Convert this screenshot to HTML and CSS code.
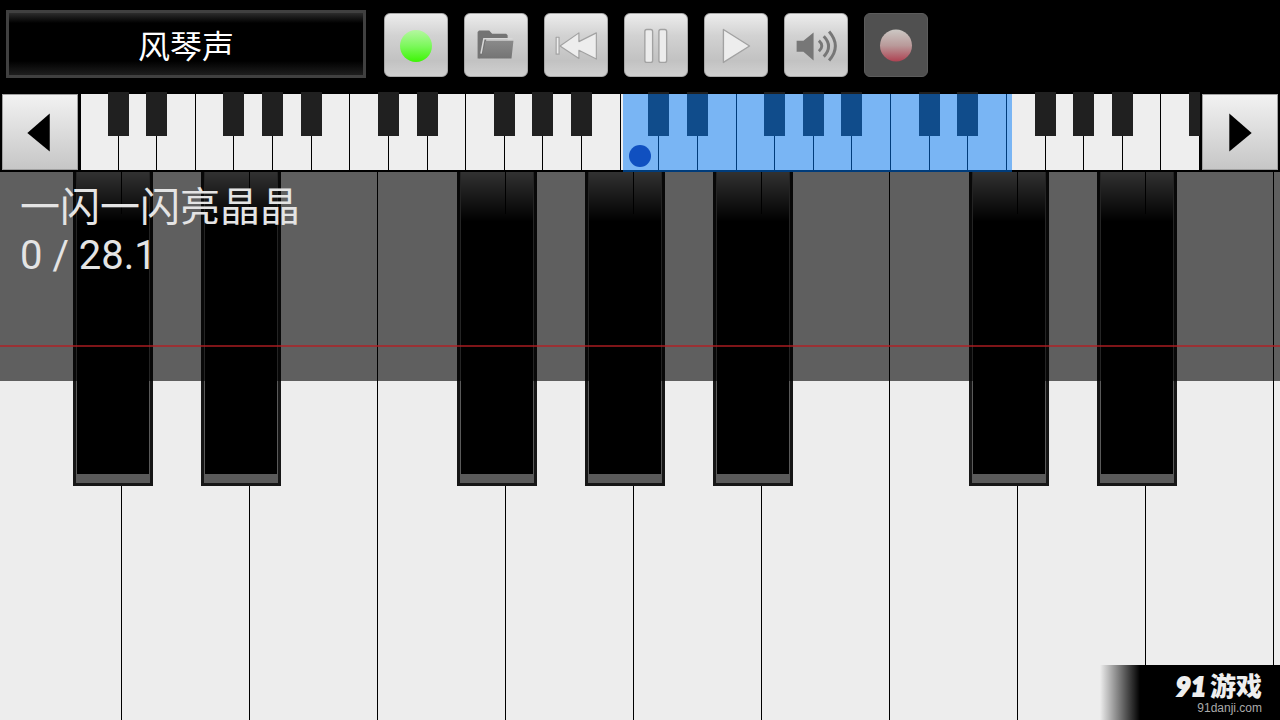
FILE: index.html
```html
<!DOCTYPE html>
<html lang="zh-CN">
<head>
    <meta charset="UTF-8">
    <meta name="viewport" content="width=device-width, initial-scale=1.0">
    <title>风琴声</title>
    <link rel="stylesheet" href="styles.css">
</head>
<body>
    <header class="toolbar">
        <button class="instrument">风琴声</button>
        <div class="controls">
            <button class="control" aria-label="Status">
                <svg viewBox="0 0 64 64">
                    <defs>
                        <linearGradient id="green" x1="0" y1="0" x2="0" y2="1">
                            <stop offset="0" stop-color="#b4f7a0"/>
                            <stop offset="0.5" stop-color="#7cf85c"/>
                            <stop offset="1" stop-color="#3df505"/>
                        </linearGradient>
                    </defs>
                    <circle cx="32" cy="33" r="16.500" fill="url(#green)"/>
                </svg>
            </button>
            <button class="control" aria-label="Open">
                <svg viewBox="0 0 64 64">
                    <defs>
                        <linearGradient id="folder" x1="0" y1="0" x2="0" y2="1">
                            <stop offset="0" stop-color="#8a8a8a"/>
                            <stop offset="1" stop-color="#747474"/>
                        </linearGradient>
                    </defs>
                    <path d="M13 18.500l1.500-1.500H25l3 3.500h14.500l1.500 1.500v4H22l-3 18.500L14 46h-1z" fill="#747474"/>
                    <path d="M16.500 41L19.500 25.500H49" fill="none" stroke="#d8d8d8" stroke-width="1.600"/>
                    <path d="M21.500 27.500h28.500L48 46H14l4-4z" fill="url(#folder)"/>
                </svg>
            </button>
            <button class="control" aria-label="Rewind">
                <svg viewBox="0 0 64 64">
                    <g fill="#ededed" stroke="#a2a2a2" stroke-width="1.200" stroke-linejoin="round">
                        <rect x="11.500" y="24" width="3" height="17.500"/>
                        <path d="M15.500 33L35 19.500V28.500l18-9v27L35 37.500V46z"/>
                    </g>
                </svg>
            </button>
            <button class="control" aria-label="Pause">
                <svg viewBox="0 0 64 64">
                    <g fill="#ececec" stroke="#a2a2a2" stroke-width="1.400">
                        <rect x="20.500" y="16" width="8" height="34" rx="2"/>
                        <rect x="35" y="16" width="8" height="34" rx="2"/>
                    </g>
                </svg>
            </button>
            <button class="control" aria-label="Play">
                <svg viewBox="0 0 64 64">
                    <path d="M19 16L46 33 19 50z" fill="#ededed" stroke="#a2a2a2" stroke-width="1.400" stroke-linejoin="round"/>
                </svg>
            </button>
            <button class="control" aria-label="Volume">
                <svg viewBox="0 0 64 64">
                    <path d="M12 27.500h7L29.500 19v29L19 39h-7z" fill="#777"/>
                    <g fill="none" stroke="#777" stroke-width="3">
                        <path d="M35 27.500q6 5.500 0 11"/>
                        <path d="M40 23q10 10.500 0 21"/>
                        <path d="M45.500 18q13 15 0 30"/>
                    </g>
                </svg>
            </button>
            <button class="control control-dim" aria-label="Record">
                <svg viewBox="0 0 64 64">
                    <defs>
                        <linearGradient id="red" x1="0" y1="0" x2="0" y2="1">
                            <stop offset="0" stop-color="#ccc8c4"/>
                            <stop offset="0.5" stop-color="#b99a9a"/>
                            <stop offset="1" stop-color="#ae4252"/>
                        </linearGradient>
                    </defs>
                    <circle cx="32" cy="32.500" r="16.500" fill="url(#red)"/>
                </svg>
            </button>
        </div>
    </header>

    <nav class="navigator">
        <button class="arrow" aria-label="Scroll left">
            <svg viewBox="0 0 76 76"><path d="M25 39L48 19v39z"/></svg>
        </button>
        <div class="overview">
            <div class="mini-keys" id="miniKeys"></div>
            <div class="window"><span class="middle-c"></span></div>
        </div>
        <button class="arrow" aria-label="Scroll right">
            <svg viewBox="0 0 76 76"><path d="M50 39L27 19v39z"/></svg>
        </button>
    </nav>

    <main class="piano">
        <div class="keys" id="keys"></div>
        <div class="song">
            <p>一闪一闪亮晶晶</p>
            <p>0 / 28.1</p>
            <span class="hit-line"></span>
        </div>
        <div class="brand">
            <div class="brand-name"><span class="brand-number">91</span>游戏</div>
            <div class="brand-site">91danji.com</div>
        </div>
    </main>

    <script>
        // White keys of an octave that have a black key on their right
        const sharps = [0, 1, 3, 4, 5];

        // Function to fill an element with white keys, starting at C
        function buildKeys(id, count, tag) {
            const parent = document.getElementById(id);
            for (let i = 0; i < count; i++) {
                const key = document.createElement(tag);
                key.className = 'white';
                key.style.gridColumn = i + 1;
                parent.appendChild(key);
                if (sharps.includes(i % 7)) {
                    const black = document.createElement(tag);
                    black.className = 'black';
                    // Sits in the same column as its white key
                    black.style.gridColumn = i + 1;
                    parent.appendChild(black);
                }
            }
        }

        buildKeys('miniKeys', 29, 'span');
        buildKeys('keys', 11, 'button');
    </script>
</body>
</html>
```
FILE: styles.css
```css
* {
    box-sizing: border-box;
}

body {
    margin: 0;
    min-height: 100vh;
    display: flex;
    flex-direction: column;
    background-color: #000;
    color: #fff;
    font-family: Roboto, "Noto Sans CJK SC", sans-serif;
    overflow: hidden;
}

button {
    padding: 0;
    border: none;
    border-radius: 0;
    font: inherit;
    color: inherit;
    cursor: pointer;
}

svg {
    display: block;
    width: 100%;
    height: 100%;
}

/* Top toolbar */
.toolbar {
    display: flex;
    align-items: flex-end;
    gap: 18px;
    padding: 10px 6px 14px;
}

.instrument {
    width: 360px;
    height: 68px;
    border: 3px solid #404040;
    background: linear-gradient(#2c2c2c, #000 10px, #000 48px, #1e1e1e);
    font-size: 32px;
}

.controls {
    display: flex;
    gap: 16px;
    padding-bottom: 1px;
}

.control {
    width: 64px;
    height: 64px;
    border: 1px solid #a8a8a8;
    border-radius: 6px;
    background: linear-gradient(#ececec, #d2d2d2 35%, #c2c2c2 75%, #d0d0d0);
}

.control-dim {
    border-color: #5c5c5c;
    background: #505050;
}

/* Small keyboard with the visible range */
.navigator {
    display: flex;
    height: 80px;
    padding: 2px 0;
}

.arrow {
    flex: none;
    width: 76px;
    margin: 0 2px;
    border: 1px solid #a0a0a0;
    background: linear-gradient(#f2f2f2, #c6c6c6);
}

.overview {
    position: relative;
    flex: 1;
    margin: -2px 0;
    padding: 2px 0;
    overflow: hidden;
}

.mini-keys {
    display: grid;
    grid-template-columns: repeat(29, 1fr);
    height: 100%;
}

.mini-keys .white {
    grid-row: 1;
    background-color: #eee;
    border-right: 1px solid #000;
}

.mini-keys .white:first-child {
    border-left: 1px solid #000;
}

.mini-keys .black {
    grid-row: 1;
    justify-self: end;
    z-index: 1;
    width: 21px;
    height: 44px;
    margin: -2px -10px 0 0;
    background-color: #202020;
}

.window {
    position: absolute;
    z-index: 2;
    top: 2px;
    bottom: 0;
    left: 48.5%;
    width: 34.7%;
    background-color: rgba(0, 122, 250, 0.49);
}

.middle-c {
    position: absolute;
    left: 6px;
    bottom: 5px;
    width: 22px;
    height: 22px;
    border-radius: 50%;
    background-color: #1050c0;
}

/* Playing keyboard */
.piano {
    position: relative;
    flex: 1;
    display: flex;
    overflow: hidden;
}

.keys {
    flex: none;
    display: grid;
    grid-template-columns: repeat(11, 1fr);
    width: 110%;
    margin-left: -6px;
}

.keys .white {
    grid-row: 1;
    background-color: #ededed;
    border-right: 1px solid #000;
}

.keys .black {
    grid-row: 1;
    justify-self: end;
    position: relative;
    z-index: 1;
    width: 80px;
    height: 57.3%;
    margin-right: -31px;
    border: solid #161616;
    border-width: 0 3px 3px;
    background:
        linear-gradient(#000, #000) 45px 0 / 1px 42px no-repeat,
        linear-gradient(#7c7c7c, #000 50px);
}

/* Bevel around the black key */
.keys .black::before {
    content: "";
    position: absolute;
    inset: 0;
    border: solid #5a5a5a;
    border-width: 0 1px 9px;
}

/* Shaded area with the song text */
.song {
    position: absolute;
    z-index: 2;
    top: 0;
    left: 0;
    right: 0;
    height: 38.1%;
    padding: 12px 20px;
    background-color: rgba(0, 0, 0, 0.6);
    color: #e4e4e4;
    font-size: 40px;
    line-height: 48px;
}

.song p {
    margin: 0;
}

.hit-line {
    position: absolute;
    left: 0;
    right: 0;
    bottom: 34px;
    height: 2px;
    background-color: rgba(180, 30, 34, 0.7);
}

/* Corner logo */
.brand {
    position: absolute;
    z-index: 2;
    right: 0;
    bottom: 0;
    width: 180px;
    height: 55px;
    padding: 6px 18px 0 0;
    background: linear-gradient(to right, transparent, #000 40px);
    text-align: right;
}

.brand-name {
    font-size: 26px;
    font-weight: 900;
    line-height: 30px;
    color: #eee;
}

.brand-number {
    margin-right: 4px;
    font-family: Lato, sans-serif;
    font-style: italic;
    -webkit-text-stroke: 2px #eee;
}

.brand-site {
    font-family: "Liberation Sans", Arial, sans-serif;
    font-size: 12px;
    line-height: 12px;
    color: #aaa;
}
```
